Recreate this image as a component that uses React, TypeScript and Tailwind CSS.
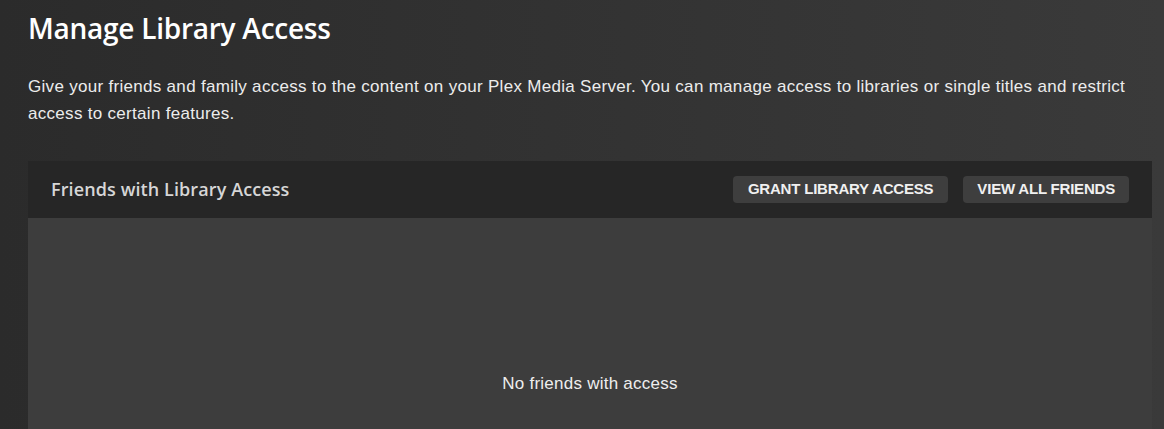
import React from 'react';

const sans = { fontFamily: '"Liberation Sans", Arial, sans-serif' };

export default function App() {
  return (
    <div className="h-[429px] overflow-hidden bg-gradient-to-r from-[#2b2b2b] to-[#3a3a3a] pl-[28px] pr-[12px]">
      {/* Page title */}
      <h1 className="pt-[10px] text-[28px] font-semibold leading-[36px] tracking-[-0.25px] text-white font-['Open_Sans',sans-serif]">
        Manage Library Access
      </h1>
      <p className="mt-[27px] text-[17px] leading-[27px] tracking-[0.3px] text-[#ececec]" style={sans}>
        Give your friends and family access to the content on your Plex Media Server. You can manage access to libraries or single titles and restrict access to certain features.
      </p>

      {/* Friends panel */}
      <div className="mt-[34px] w-[1124px]">
        <div className="flex h-[57px] items-center justify-between bg-[#262626] pl-[23px] pr-[23px]">
          <h2 className="text-[18px] font-semibold tracking-[0.1px] text-[#d6d6d6] font-['Open_Sans',sans-serif]">
            Friends with Library Access
          </h2>
          <div className="flex gap-[15px]">
            <button className="h-[27px] rounded-[4px] bg-[#3e3e3e] px-[15px] text-[15px] font-bold tracking-[-0.2px] text-[#f0f0f0]" style={sans}>
              GRANT LIBRARY ACCESS
            </button>
            <button className="h-[27px] rounded-[4px] bg-[#3e3e3e] px-[14px] text-[15px] font-bold tracking-[-0.2px] text-[#f0f0f0]" style={sans}>
              VIEW ALL FRIENDS
            </button>
          </div>
        </div>
        <div className="h-[300px] bg-[#3d3d3d] pt-[155px] text-center">
          <p className="text-[17px] leading-[22px] tracking-[0.25px] text-[#eeeeee]" style={sans}>
            No friends with access
          </p>
        </div>
      </div>
    </div>
  );
}
